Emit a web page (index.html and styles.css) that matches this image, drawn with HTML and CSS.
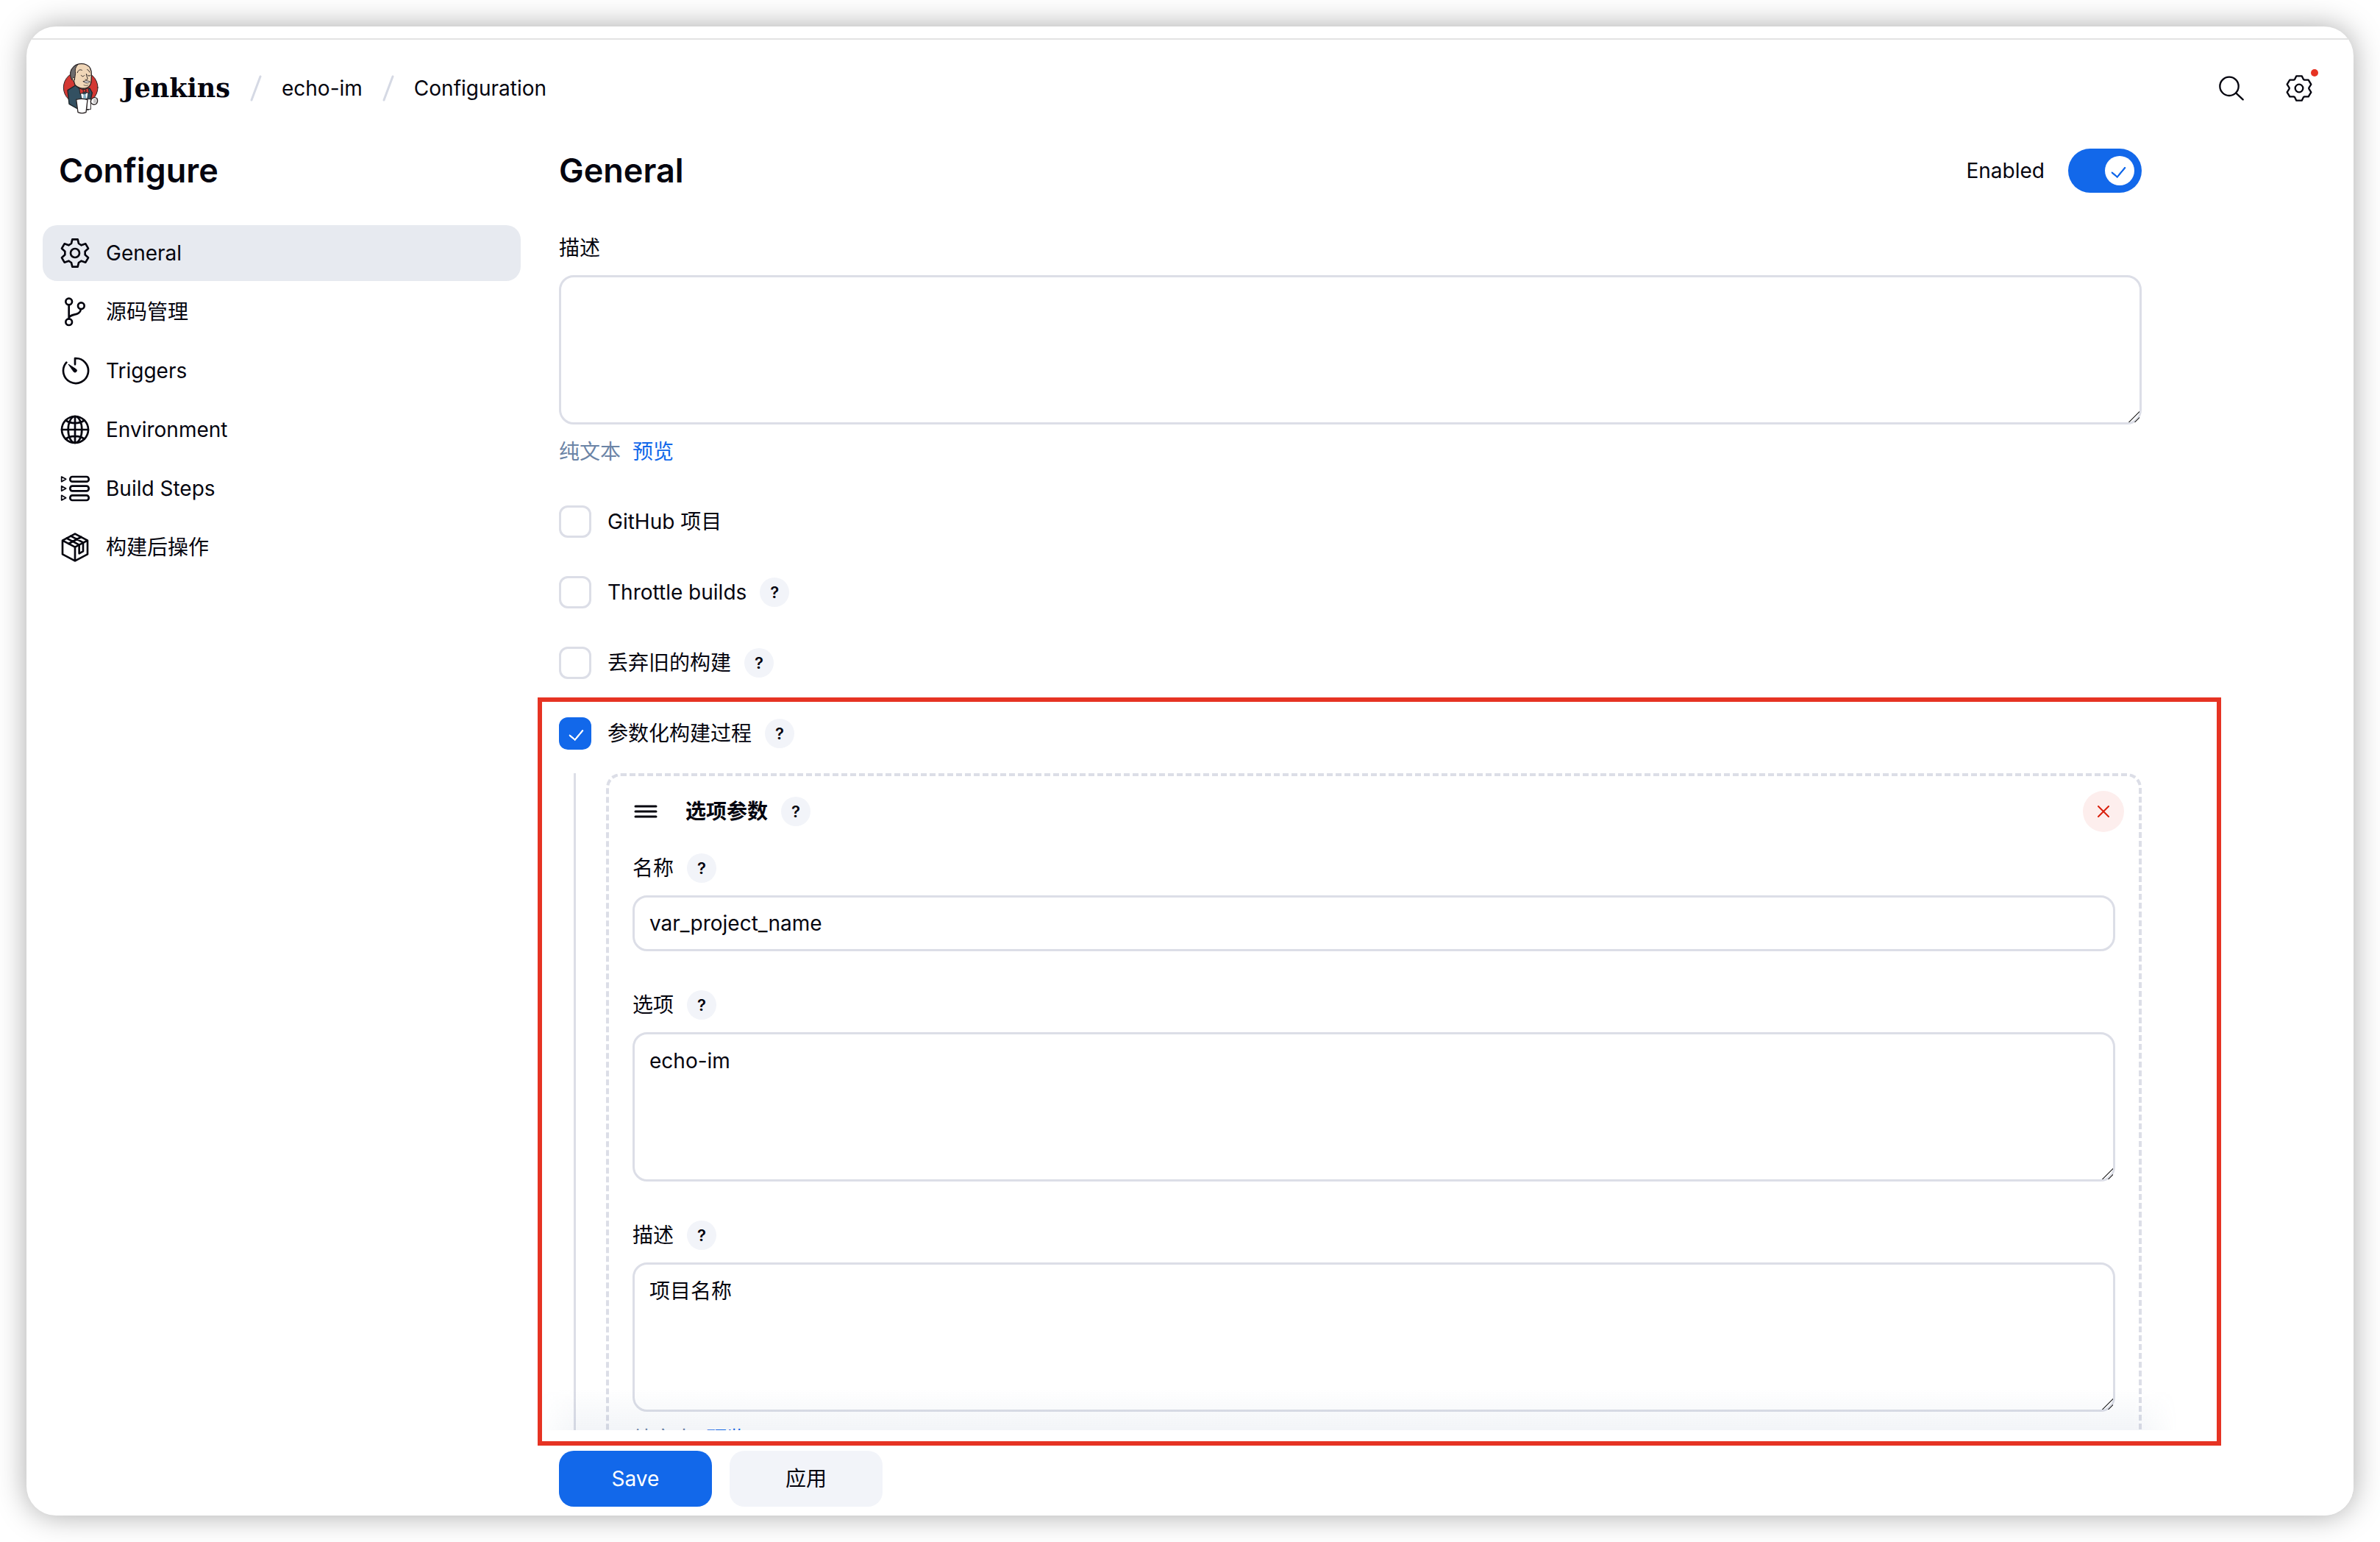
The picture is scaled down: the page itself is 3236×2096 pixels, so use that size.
FILE: index.html
```html
<!DOCTYPE html>
<html lang="zh-CN">
<head>
    <meta charset="UTF-8">
    <meta name="viewport" content="width=device-width, initial-scale=1.0">
    <title>echo-im Config [Jenkins]</title>
    <link rel="stylesheet" href="styles.css">
</head>
<body>
    <div class="window">
        <div class="window-strip"></div>

        <!-- 顶部导航 -->
        <header class="header">
            <a class="brand" href="#">
                <svg class="brand-logo" viewBox="42 45 150 210" aria-hidden="true">
                    <ellipse cx="119" cy="147" rx="70" ry="67" fill="#d33833" stroke="#2b2425" stroke-width="3"/>
                    <path d="M66 158 L98 138 L122 158 L156 150 L166 168 L160 196 L150 238 L104 232 L72 214 Z" fill="#335061" stroke="#1c2529" stroke-width="4" stroke-linejoin="round"/>
                    <path d="M118 166 L134 176 L150 164 L146 192 L124 192 Z" fill="#ffffff" stroke="#1c2529" stroke-width="2"/>
                    <path d="M131 174 L139 174 L142 192 L129 192 Z" fill="#81b0c4"/>
                    <path d="M82 108 C74 96 76 78 88 65 C100 50 124 46 142 54 C158 61 164 78 163 96 C163 120 164 142 142 149 C126 154 106 148 96 136 C92 128 92 120 90 116 Z" fill="#f0d6b7" stroke="#2b2425" stroke-width="4"/>
                    <path d="M82 114 C74 96 76 78 88 65 C94 58 102 54 108 53 C96 66 96 76 98 88 L94 116 Z" fill="#6d6b6d" stroke="#2b2425" stroke-width="3"/>
                    <path d="M92 106 C84 102 82 116 90 122" fill="#f0d6b7" stroke="#2b2425" stroke-width="3"/>
                    <path d="M106 86 C108 76 116 72 124 76 M146 74 C152 76 154 80 155 84 M121 97 C124 103 130 103 134 98 M147 96 C150 101 156 101 158 97 M142 92 C142 102 150 108 146 114 C143 117 139 116 138 114" fill="none" stroke="#2b2425" stroke-width="3" stroke-linecap="round"/>
                    <path d="M130 122 C138 118 150 120 157 123 C152 130 138 131 130 122 Z" fill="#ffffff" stroke="#2b2425" stroke-width="3"/>
                    <path d="M132 137 C138 140 146 140 150 137" fill="none" stroke="#2b2425" stroke-width="2"/>
                    <path d="M114 150 L132 157 L150 149 L154 170 L137 164 L118 173 Z" fill="#d33833" stroke="#2b2425" stroke-width="3" stroke-linejoin="round"/>
                    <circle cx="135" cy="160" r="6" fill="#d33833" stroke="#2b2425" stroke-width="3"/>
                    <path d="M146 194 H160 V236 H144 Z" fill="#ffffff" stroke="#2b2425" stroke-width="3"/>
                    <path d="M162 196 C168 186 180 186 186 192 C190 200 188 212 180 215 C172 218 162 214 160 206 Z" fill="#ffffff" stroke="#2b2425" stroke-width="4"/>
                    <path d="M172 198 H184 M172 206 H184" stroke="#2b2425" stroke-width="2"/>
                    <path d="M101 196 C115 192 132 192 147 197 L141 248 C132 252 117 252 108 248 Z" fill="#ffffff" stroke="#2b2425" stroke-width="4" stroke-linejoin="round"/>
                </svg>
                <span class="brand-name">Jenkins</span>
            </a>
            <nav class="breadcrumbs" aria-label="breadcrumb">
                <svg class="slash" viewBox="0 0 16 36" aria-hidden="true"><path d="M2 34 L14 2"/></svg>
                <a href="#">echo-im</a>
                <svg class="slash" viewBox="0 0 16 36" aria-hidden="true"><path d="M2 34 L14 2"/></svg>
                <a href="#">Configuration</a>
            </nav>
            <div class="header-actions">
                <button class="icon-button" type="button" aria-label="Search">
                    <svg viewBox="-54 -54 108 108"><circle cx="-9" cy="-8" r="38"/><path d="M19 20 L47 46"/></svg>
                </button>
                <button class="icon-button" type="button" aria-label="Manage Jenkins">
                    <svg viewBox="-54 -54 108 108">
                        <path d="M-18 -36 L-11 -50 H11 L18 -36 L22 -34 L38 -34 L49 -16 L40 -2 V2 L49 16 L38 34 L22 34 L18 36 L11 50 H-11 L-18 36 L-22 34 L-38 34 L-49 16 L-40 2 V-2 L-49 -16 L-38 -34 L-22 -34 Z"/>
                        <circle r="16"/>
                    </svg>
                    <span class="dot"></span>
                </button>
            </div>
        </header>

        <div class="page">
            <!-- 左侧菜单 -->
            <aside class="sidebar">
                <h1>Configure</h1>
                <nav class="tasks">
                    <a class="task active" href="#general">
                        <svg viewBox="-60 -60 120 120">
                            <path d="M-15 -39 L-11 -56 H11 L15 -39 L26 -32 L43 -38 L54 -19 L41 -7 V7 L54 19 L43 38 L26 32 L15 39 L11 56 H-11 L-15 39 L-26 32 L-43 38 L-54 19 L-41 7 V-7 L-54 -19 L-43 -38 L-26 -32 Z"/>
                            <circle r="18"/>
                        </svg>
                        General
                    </a>
                    <a class="task" href="#scm">
                        <svg viewBox="0 0 120 120">
                            <circle cx="35" cy="18" r="13"/>
                            <circle cx="85" cy="35" r="13"/>
                            <circle cx="35" cy="101" r="13"/>
                            <path d="M35 32 V87 M36 82 C46 66 80 76 84 49"/>
                        </svg>
                        源码管理
                    </a>
                    <a class="task" href="#triggers">
                        <svg viewBox="0 0 120 120">
                            <path d="M60 34 V9 A51 51 0 1 1 25 26"/>
                            <path d="M34 34 L65 54 A7 7 0 0 1 55 64 Z" fill="currentColor" stroke-width="3"/>
                        </svg>
                        Triggers
                    </a>
                    <a class="task" href="#environment">
                        <svg viewBox="0 0 120 120">
                            <circle cx="60" cy="60" r="54"/>
                            <ellipse cx="60" cy="60" rx="28" ry="54"/>
                            <path d="M60 6 V114 M6 60 H114 M22 22 C42 37 78 37 98 22 M22 98 C42 83 78 83 98 98"/>
                        </svg>
                        Environment
                    </a>
                    <a class="task" href="#build-steps">
                        <svg viewBox="0 0 120 120">
                            <rect x="40" y="12" width="76" height="20" rx="9"/>
                            <rect x="40" y="50" width="76" height="20" rx="9"/>
                            <rect x="40" y="88" width="76" height="20" rx="9"/>
                            <path d="M5 12 V32 L23 22 Z M5 50 V70 L23 60 Z M5 88 V108 L23 98 Z" stroke-width="5"/>
                        </svg>
                        Build Steps
                    </a>
                    <a class="task" href="#post-build">
                        <svg viewBox="0 0 120 120">
                            <path d="M60 5 L111 32 V88 L60 115 L9 88 V32 Z M9 32 L60 59 L111 32 M60 59 V115"/>
                            <path d="M43 14 L94 41 M26 23 L77 50 M85 18 L34 45 M77 50 V85 L93 76 V41"/>
                        </svg>
                        构建后操作
                    </a>
                </nav>
            </aside>

            <!-- 配置表单 -->
            <main class="content">
                <form class="config-form">
                    <div class="form-body">
                        <div class="section-title">
                            <h2 id="general">General</h2>
                            <label class="enable">
                                Enabled
                                <input class="toggle" type="checkbox" checked>
                            </label>
                        </div>

                        <div class="field">
                            <div class="field-label"><label for="description">描述</label></div>
                            <textarea id="description" class="text-area"></textarea>
                            <div class="preview">纯文本 <a href="#">预览</a></div>
                        </div>

                        <div class="options">
                            <div class="option">
                                <input class="checkbox" type="checkbox" id="github">
                                <label for="github">GitHub 项目</label>
                            </div>
                            <div class="option">
                                <input class="checkbox" type="checkbox" id="throttle">
                                <label for="throttle">Throttle builds</label>
                                <button class="help" type="button">?</button>
                            </div>
                            <div class="option">
                                <input class="checkbox" type="checkbox" id="discard">
                                <label for="discard">丢弃旧的构建</label>
                                <button class="help" type="button">?</button>
                            </div>
                            <div class="option">
                                <input class="checkbox" type="checkbox" id="params" checked>
                                <label for="params">参数化构建过程</label>
                                <button class="help" type="button">?</button>
                            </div>
                        </div>

                        <div class="nested">
                            <div class="param-card">
                                <div class="param-header">
                                    <svg class="drag" viewBox="0 0 36 36" aria-hidden="true"><path d="M4 11 H32 M4 18 H32 M4 25 H32"/></svg>
                                    <strong>选项参数</strong>
                                    <button class="help" type="button">?</button>
                                    <button class="remove" type="button" aria-label="Delete">
                                        <svg viewBox="0 0 16 16"><path d="M1 1 L15 15 M15 1 L1 15"/></svg>
                                    </button>
                                </div>
                                <div class="field">
                                    <div class="field-label"><label for="name">名称</label><button class="help" type="button">?</button></div>
                                    <input id="name" class="text-input" type="text" value="var_project_name">
                                </div>
                                <div class="field">
                                    <div class="field-label"><label for="choices">选项</label><button class="help" type="button">?</button></div>
                                    <textarea id="choices" class="text-area">echo-im</textarea>
                                </div>
                                <div class="field">
                                    <div class="field-label"><label for="param-desc">描述</label><button class="help" type="button">?</button></div>
                                    <textarea id="param-desc" class="text-area">项目名称</textarea>
                                    <div class="preview">纯文本 <a href="#">预览</a></div>
                                </div>
                            </div>
                        </div>
                    </div>

                    <div class="bottom-bar">
                        <button class="button primary" type="submit">Save</button>
                        <button class="button" type="button">应用</button>
                    </div>
                </form>
                <!-- 红框标注 -->
                <div class="highlight"></div>
            </main>
        </div>
    </div>
</body>
</html>
```
FILE: styles.css
```css
* {
    margin: 0;
    padding: 0;
    box-sizing: border-box;
}

:root {
    --text: #05050f;
    --muted: #6b84a6;
    --blue: #1268ea;
    --border: #dcdee7;
    --soft: #f2f4f9;
    --red: #e63323;
}

body {
    height: 100vh;
    padding: 36px;
    background: #fff;
    color: var(--text);
    font-family: Inter, "Noto Sans CJK SC", sans-serif;
    font-size: 28px;
    line-height: 40px;
}

a {
    color: inherit;
    text-decoration: none;
}

button,
input,
textarea {
    font: inherit;
    color: inherit;
}

button {
    border: none;
    cursor: pointer;
}

svg {
    flex: none;
    fill: none;
    stroke: currentColor;
    stroke-width: 7;
    stroke-linecap: round;
    stroke-linejoin: round;
}

.window {
    display: flex;
    flex-direction: column;
    height: 100%;
    border-radius: 40px;
    background: #fff;
    box-shadow: 0 0 40px rgba(0, 0, 0, 0.34);
    overflow: hidden;
}

.window-strip {
    flex: none;
    height: 18px;
    border-bottom: 2px solid #e3e3e3;
}

/* 顶部导航 */
.header {
    display: flex;
    flex: none;
    align-items: center;
    height: 132px;
    padding: 0 56px 0 48px;
}

.brand {
    display: flex;
    align-items: center;
    gap: 32px;
}

.brand-logo {
    width: 50px;
    height: 70px;
    stroke: none;
}

.brand-name {
    font-family: "DejaVu Serif", serif;
    font-size: 35px;
    font-weight: bold;
}

.breadcrumbs {
    display: flex;
    align-items: center;
    gap: 27px;
    margin-left: 27px;
}

.slash {
    width: 16px;
    height: 36px;
    stroke: #d5d9e4;
    stroke-width: 3;
}

.header-actions {
    display: flex;
    gap: 56px;
    margin-left: auto;
}

.icon-button {
    position: relative;
    width: 36px;
    height: 36px;
    background: none;
}

.icon-button svg {
    display: block;
    width: 36px;
    height: 36px;
}

.dot {
    position: absolute;
    top: -8px;
    right: -8px;
    width: 10px;
    height: 10px;
    border-radius: 50%;
    background: var(--red);
}

.page {
    display: grid;
    flex: 1;
    grid-template-columns: 694px 1fr;
    min-height: 0;
}

/* 左侧菜单 */
.sidebar {
    padding: 16px 22px;
}

h1,
h2 {
    font-size: 45px;
    font-weight: 600;
    line-height: 60px;
}

.sidebar h1 {
    margin: 0 0 44px 22px;
}

.tasks {
    display: flex;
    flex-direction: column;
    gap: 4px;
}

.task {
    display: flex;
    align-items: center;
    gap: 22px;
    height: 76px;
    padding: 0 24px;
    border-radius: 20px;
}

.task svg {
    width: 40px;
    height: 40px;
    stroke-width: 8;
}

.task.active {
    background: #e7eaf0;
}

/* 表单 */
.content {
    position: relative;
    min-height: 0;
}

.config-form {
    display: flex;
    flex-direction: column;
    height: 100%;
}

.form-body {
    flex: 1;
    min-height: 0;
    padding: 16px 288px 0 30px;
    overflow: hidden;
}

.section-title {
    display: flex;
    align-items: center;
    justify-content: space-between;
    margin-bottom: 55px;
}

.enable {
    display: flex;
    align-items: center;
    gap: 32px;
}

.toggle {
    position: relative;
    appearance: none;
    width: 100px;
    height: 60px;
    border-radius: 30px;
    background: var(--blue);
}

.toggle::before {
    content: "";
    position: absolute;
    top: 10px;
    right: 10px;
    width: 40px;
    height: 40px;
    border-radius: 50%;
    background: #fff;
}

.toggle::after,
.checkbox:checked::after {
    content: "";
    position: absolute;
    width: 10px;
    height: 18px;
    border: solid #fff;
    border-width: 0 3px 3px 0;
    border-radius: 1px;
    transform: rotate(40deg) scale(0.9);
}

.toggle::after {
    top: 19px;
    right: 25px;
    border-color: var(--blue);
}

.field {
    margin-bottom: 53px;
}

.field-label {
    display: flex;
    align-items: center;
    gap: 18px;
    margin-bottom: 17px;
}

.help {
    width: 40px;
    height: 40px;
    border-radius: 50%;
    background: var(--soft);
    font-size: 22px;
    font-weight: 600;
    line-height: 40px;
}

.text-input,
.text-area {
    display: block;
    width: 100%;
    padding: 0 20px;
    border: 3px solid var(--border);
    border-radius: 20px;
    background: #fff;
    outline: none;
}

.text-input {
    height: 76px;
}

.text-area {
    height: 203px;
    padding-top: 16px;
    resize: vertical;
}

.text-area::-webkit-resizer {
    background: linear-gradient(135deg, transparent 48%, #555 48%, #555 56%, transparent 56%, transparent 74%, #555 74%, #555 82%, transparent 82%);
}

.preview {
    display: flex;
    gap: 16px;
    margin-top: 17px;
    color: var(--muted);
}

.preview a {
    color: var(--blue);
}

.options {
    display: flex;
    flex-direction: column;
    gap: 52px;
}

.option {
    display: flex;
    align-items: center;
    height: 44px;
}

.option label {
    margin: 0 18px 0 22px;
}

.checkbox {
    position: relative;
    appearance: none;
    width: 44px;
    height: 44px;
    border: 3px solid var(--border);
    border-radius: 12px;
}

.checkbox:checked {
    border-color: var(--blue);
    background: var(--blue);
}

.checkbox:checked::after {
    top: 8px;
    left: 14px;
}

/* 参数化构建 */
.nested {
    margin: 32px 0 0 20px;
    padding-left: 41px;
    border-left: 3px solid var(--border);
}

.param-card {
    padding: 20px 32px;
    border: 4px dashed var(--border);
    border-radius: 20px;
}

.param-header {
    display: flex;
    align-items: center;
    gap: 18px;
    margin: 0 -12px 29px 0;
}

.param-header strong {
    margin-left: 18px;
    font-weight: 600;
}

.drag {
    width: 36px;
    height: 36px;
    stroke-width: 3;
}

.remove {
    width: 56px;
    height: 56px;
    margin-left: auto;
    border-radius: 50%;
    background: #fdeeed;
    color: #d9200d;
}

.remove svg {
    display: block;
    width: 16px;
    height: 16px;
    margin: 0 auto;
    stroke-width: 2;
}

/* 底部按钮 */
.bottom-bar {
    position: relative;
    display: flex;
    flex: none;
    gap: 24px;
    padding: 28px 288px 12px 30px;
    background: #fff;
}

.bottom-bar::before {
    content: "";
    position: absolute;
    right: 240px;
    bottom: 100%;
    left: 0;
    height: 56px;
    background: linear-gradient(to top, rgba(90, 120, 160, 0.08), transparent);
    mask-image: linear-gradient(to right, transparent, #000 60px, #000 calc(100% - 60px), transparent);
    pointer-events: none;
}

.button {
    min-width: 208px;
    height: 76px;
    border-radius: 20px;
    background: var(--soft);
}

.button.primary {
    background: var(--blue);
    color: #fff;
}

.highlight {
    position: absolute;
    top: 762px;
    right: 180px;
    bottom: 95px;
    left: 1px;
    border: 6px solid var(--red);
    pointer-events: none;
}
```
